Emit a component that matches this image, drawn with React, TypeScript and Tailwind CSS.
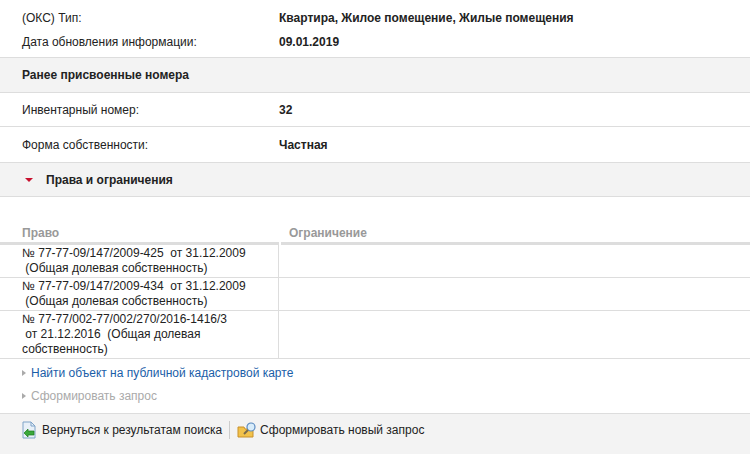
export default function App() {
  const rights = [
    ["№ 77-77-09/147/2009-425  от 31.12.2009", " (Общая долевая собственность)"],
    ["№ 77-77-09/147/2009-434  от 31.12.2009", " (Общая долевая собственность)"],
    ["№ 77-77/002-77/002/270/2016-1416/3", " от 21.12.2016  (Общая долевая", "собственность)"],
  ]
  const arrow = (
    <span className="w-0 h-0 border-t-[3px] border-b-[3px] border-l-[4px] border-t-transparent border-b-transparent border-l-[#aaa] mr-[5px]" />
  )
  return (
    <div className="w-[750px] h-[454px] overflow-hidden bg-white text-[12px] text-[#222] font-[Liberation_Sans,Arial,sans-serif]">
      {/* Top rows */}
      <div className="flex h-[30px] items-center pt-[6px] px-[22px]">
        <div className="w-[257px]">(ОКС) Тип:</div>
        <div className="font-bold">Квартира, Жилое помещение, Жилые помещения</div>
      </div>
      <div className="flex h-[24px] items-center px-[22px]">
        <div className="w-[257px]">Дата обновления информации:</div>
        <div className="font-bold">09.01.2019</div>
      </div>
      <div className="h-[4px] border-b border-[#ddd]" />
      <div className="h-[35px] flex items-center px-[22px] bg-[#f3f3f3] border-b border-[#ddd] font-bold">
        Ранее присвоенные номера
      </div>
      <div className="flex h-[34px] items-center px-[22px] border-b border-[#ddd]">
        <div className="w-[257px]">Инвентарный номер:</div>
        <div className="font-bold">32</div>
      </div>
      <div className="flex h-[36px] items-center px-[22px] border-b border-[#ddd]">
        <div className="w-[257px]">Форма собственности:</div>
        <div className="font-bold">Частная</div>
      </div>
      <div className="h-[34px] flex items-center pl-[25px] bg-[#f3f3f3] border-b border-[#ddd] font-bold">
        <span className="w-0 h-0 border-l-[4px] border-r-[4px] border-t-[4px] border-l-transparent border-r-transparent border-t-[#c8102e] mr-[13px]" />
        Права и ограничения
      </div>
      <div className="h-[26px]" />
      <div className="flex h-[22px] items-center font-bold text-[#999]">
        <div className="w-[279px] pl-[22px] h-full flex items-center border-b-[3px] border-[#ddd]">Право</div>
        <div className="flex-1 pl-[8px] h-full flex items-center border-b-[3px] border-[#ddd] ml-[2px]">Ограничение</div>
      </div>
      {rights.map((r, i) => (
        <div key={i} className="flex border-b border-[#ddd]">
          <div className="w-[279px] pl-[22px] py-[1px] leading-[15px] border-r border-[#ddd]">
            {r.map((l, j) => (
              <div key={j} className="whitespace-pre">{l}</div>
            ))}
          </div>
          <div className="flex-1" />
        </div>
      ))}
      <div className="px-[22px] pt-[3px]">
        <div className="flex items-center h-[22px] text-[#1a5ea8]">
          {arrow}Найти объект на публичной кадастровой карте
        </div>
        <div className="flex items-center h-[24px] text-[#aaa]">
          {arrow}Сформировать запрос
        </div>
      </div>
      <div className="mt-[5px] h-[50px] bg-[#f3f3f3] border-t border-[#ddd] flex items-start pt-[6px] px-[20px]">
        <div className="flex items-center h-[20px]">
          <svg width="18" height="18" viewBox="0 0 18 18" className="mr-[4px]">
            <path d="M3 1h8l4 4v12H3z" fill="#e8f0f8" stroke="#7fa3c8" />
            <path d="M11 1v4h4" fill="none" stroke="#7fa3c8" />
            <path d="M4 12l4-4v2h6v4H8v2z" fill="#3aa83a" stroke="#1e7a1e" strokeWidth="0.7" />
          </svg>
          <span>Вернуться к результатам поиска</span>
        </div>
        <div className="w-px h-[18px] bg-[#ccc] mx-[7px] mt-[1px]" />
        <div className="flex items-center h-[20px]">
          <svg width="20" height="18" viewBox="0 0 20 18" className="mr-[3px]">
            <path d="M1 6h6l1 2h8v8H1z" fill="#f2c24a" stroke="#c8902a" />
            <circle cx="14" cy="6" r="4" fill="#d8ecfa" stroke="#5a8ac0" strokeWidth="1.2" />
            <path d="M11 9l-4 4" stroke="#7a6a4a" strokeWidth="2" />
          </svg>
          <span>Сформировать новый запрос</span>
        </div>
      </div>
    </div>
  )
}
